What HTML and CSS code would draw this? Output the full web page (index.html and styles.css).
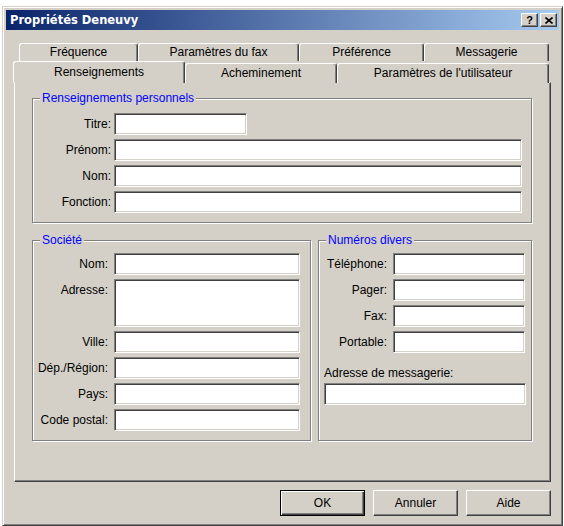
FILE: index.html
```html
<!DOCTYPE html>
<html lang="fr">
  <head>
    <meta charset="UTF-8" />
    <title>Propriétés Deneuvy</title>
    <link rel="stylesheet" href="styles.css">
  </head>

  <body>
    <div class="window">
      <div class="titlebar">
        <span class="title">Propriétés Deneuvy</span>
        <div class="caption-btns">
          <button class="cap help">?</button>
          <button class="cap close">
            <svg width="8" height="7" viewBox="0 0 8 7">
              <path d="M0.5 0.5 L7.5 6.5 M7.5 0.5 L0.5 6.5" stroke="#000" stroke-width="1.6" fill="none" />
            </svg>
          </button>
        </div>
      </div>

      <div class="client">
        <!-- onglets : deux rangées -->
        <div class="tabrow back">
          <div class="tab t-freq">Fréquence</div>
          <div class="tab t-fax">Paramètres du fax</div>
          <div class="tab t-pref">Préférence</div>
          <div class="tab t-msg">Messagerie</div>
        </div>
        <div class="tabrow front">
          <div class="tab t-info active">Renseignements</div>
          <div class="tab t-route">Acheminement</div>
          <div class="tab t-user">Paramètres de l'utilisateur</div>
        </div>

        <div class="panel">
          <div class="group personal">
            <div class="legend">Renseignements personnels</div>
            <div class="grid">
              <label class="label">Titre:</label>
              <input class="field short" type="text">
              <label class="label">Prénom:</label>
              <input class="field" type="text">
              <label class="label">Nom:</label>
              <input class="field" type="text">
              <label class="label">Fonction:</label>
              <input class="field" type="text">
            </div>
          </div>

          <div class="cols">
            <div class="group company">
              <div class="legend">Société</div>
              <div class="grid">
                <label class="label">Nom:</label>
                <input class="field" type="text">
                <label class="label">Adresse:</label>
                <textarea class="field area"></textarea>
                <label class="label">Ville:</label>
                <input class="field" type="text">
                <label class="label">Dép./Région:</label>
                <input class="field" type="text">
                <label class="label">Pays:</label>
                <input class="field" type="text">
                <label class="label">Code postal:</label>
                <input class="field" type="text">
              </div>
            </div>

            <div class="group numbers">
              <div class="legend">Numéros divers</div>
              <div class="grid">
                <label class="label">Téléphone:</label>
                <input class="field" type="text">
                <label class="label">Pager:</label>
                <input class="field" type="text">
                <label class="label">Fax:</label>
                <input class="field" type="text">
                <label class="label">Portable:</label>
                <input class="field" type="text">
              </div>
              <p class="mail-label">Adresse de messagerie:</p>
              <input class="field mail" type="text">
            </div>
          </div>
        </div>

        <div class="actions">
          <button class="btn default">OK</button>
          <button class="btn">Annuler</button>
          <button class="btn">Aide</button>
        </div>
      </div>
    </div>
  </body>
</html>
```

FILE: styles.css
```css
body {
  margin: 0;
  background: #fff;
  font-family: "Liberation Sans", Arial, sans-serif;
  font-size: 12px;
  color: #000;
}

.window {
  box-sizing: border-box;
  width: 561px;
  height: 520px;
  margin: 6px 0 0 2px;
  padding: 3px;
  background: #d4d0c8;
  border: 1px solid;
  border-color: #d4d0c8 #404040 #404040 #d4d0c8;
  box-shadow: inset 1px 1px #fff, inset -1px -1px #808080;
}

/* barre de titre */
.titlebar {
  display: flex;
  align-items: center;
  height: 20px;
  padding: 0 2px 0 4px;
  background: linear-gradient(to right, #0a246a, #a6caf0);
  color: #fff;
  font: bold 11.5px "DejaVu Sans", sans-serif;
}

.caption-btns {
  margin-left: auto;
  display: flex;
  gap: 2px;
}

.cap {
  box-sizing: border-box;
  width: 17px;
  height: 14px;
  padding: 0;
  display: flex;
  align-items: center;
  justify-content: center;
  background: #d4d0c8;
  border: 1px solid;
  border-color: #fff #404040 #404040 #fff;
  box-shadow: inset -1px -1px #808080;
  color: #000;
  font: bold 11px "Liberation Sans", Arial, sans-serif;
}

/* zone cliente */
.client {
  padding: 13px 8px 0;
}

.tabrow {
  display: flex;
}

.tab {
  box-sizing: border-box;
  border: 1px solid;
  border-color: #fff #404040 transparent #fff;
  border-bottom: 0;
  border-radius: 3px 3px 0 0;
  box-shadow: inset -1px 0 #808080;
  background: #d4d0c8;
  text-align: center;
  white-space: nowrap;
}

.back {
  height: 18px;
  padding-left: 5px;
}

.back .tab {
  height: 18px;
  line-height: 17px;
}

.front {
  height: 22px;
  margin: 0 0 -1px -1px;
  align-items: flex-end;
}

.front .tab {
  height: 20px;
  line-height: 18px;
}

.front .tab.active {
  height: 22px;
  line-height: 20px;
  position: relative;
  z-index: 1;
}

.t-freq { width: 119px; }
.t-fax { width: 161px; }
.t-pref { width: 125px; }
.t-msg { width: 125px; }
.t-info { width: 172px; }
.t-route { width: 152px; }
.t-user { width: 212px; }

.panel {
  box-sizing: border-box;
  height: 400px;
  padding: 15px 18px 0 17px;
  border: 1px solid;
  border-color: #fff #404040 #404040 #fff;
  box-shadow: inset -1px -1px #808080;
}

/* cadres de groupe */
.group {
  border: 1px solid #808080;
  box-shadow: inset 1px 1px #fff, 1px 1px #fff;
}

.legend {
  width: fit-content;
  margin: -8px 0 0 7px;
  padding: 0 2px;
  line-height: 14px;
  background: #d4d0c8;
  color: #0000ff;
}

.grid {
  display: grid;
  row-gap: 4px;
}

.label {
  line-height: 22px;
  text-align: right;
  white-space: nowrap;
}

.personal {
  padding: 0 9px 9px 0;
}

.personal .grid {
  grid-template-columns: 78px 1fr;
  column-gap: 3px;
  margin-top: 8px;
}

.cols {
  display: flex;
  gap: 7px;
  margin-top: 17px;
}

.company {
  width: 279px;
  box-sizing: border-box;
  padding: 0 10px 9px 0;
}

.company .grid {
  grid-template-columns: 75px 1fr;
  column-gap: 6px;
  margin-top: 6px;
}

.numbers {
  width: 214px;
  box-sizing: border-box;
  padding: 0 6px 0 0;
}

.numbers .grid {
  grid-template-columns: 68px 1fr;
  column-gap: 6px;
  margin-top: 6px;
}

.mail-label {
  margin: 13px 0 0 5px;
  line-height: 14px;
}

.field {
  box-sizing: border-box;
  width: 100%;
  height: 22px;
  margin: 0;
  padding: 0 3px;
  background: #fff;
  border: 1px solid;
  border-color: #808080 #fff #fff #808080;
  box-shadow: inset 1px 1px #404040, inset -1px -1px #d4d0c8;
  font: inherit;
  outline: none;
}

.field.short {
  width: 133px;
}

.field.area {
  height: 48px;
  resize: none;
}

.field.mail {
  display: block;
  width: 202px;
  margin: 3px 0 0 5px;
}

/* boutons du bas */
.actions {
  display: flex;
  justify-content: flex-end;
  gap: 8px;
  margin-top: 8px;
}

.btn {
  box-sizing: border-box;
  width: 85px;
  height: 26px;
  padding: 0;
  background: #d4d0c8;
  border: 1px solid;
  border-color: #fff #404040 #404040 #fff;
  box-shadow: inset -1px -1px #808080;
  color: #000;
  font: inherit;
}

.btn.default {
  border-color: #000;
  box-shadow: inset 1px 1px #fff, inset -1px -1px #404040, inset -2px -2px #808080;
}
```
